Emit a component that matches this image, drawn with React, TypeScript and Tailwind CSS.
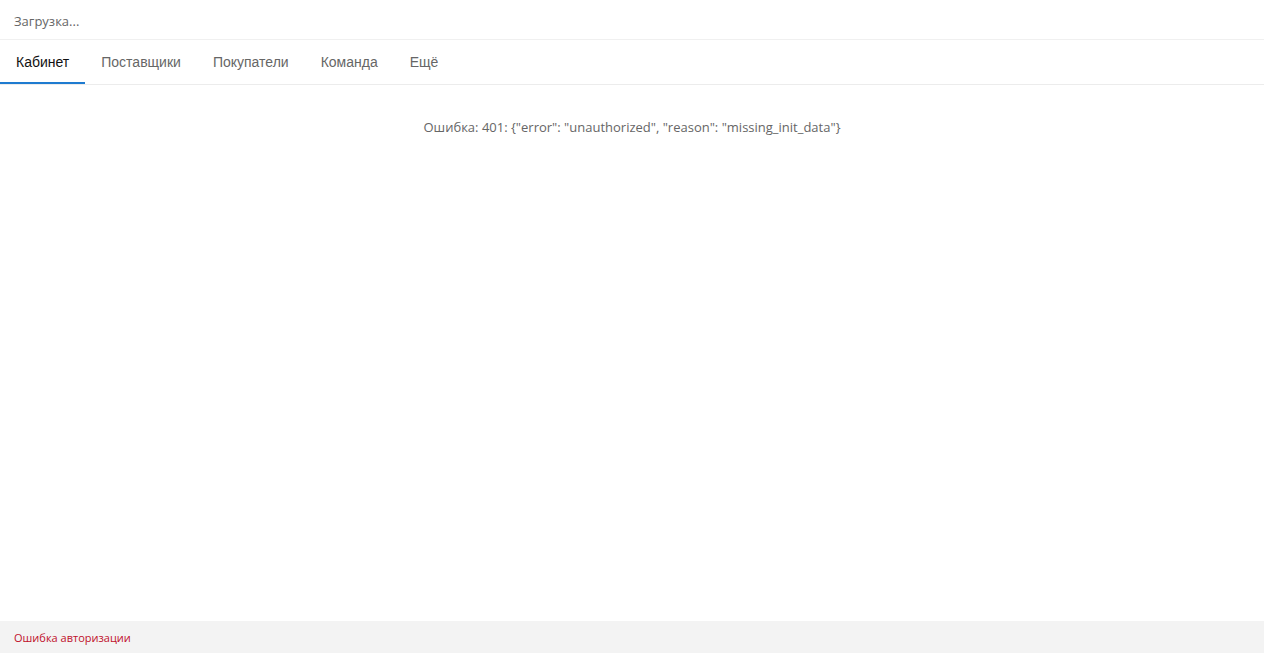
import React from "react";

export default function App() {
  const tabs = ["Кабинет", "Поставщики", "Покупатели", "Команда", "Ещё"];
  return (
    <div className="flex h-[653px] w-full flex-col bg-white" style={{ fontFamily: '"Open Sans", "Noto Sans", sans-serif' }}>
      <div className="flex h-[40px] items-center border-b border-[#f0f0f0] px-[14px] pt-[4px] text-[13px] text-[#666]">
        Загрузка...
      </div>
      <div className="flex h-[45px] border-b border-[#ececec]" style={{ fontFamily: '"Liberation Sans", Arial, sans-serif' }}>
        {tabs.map((t, i) => (
          <div
            key={t}
            className={
              i === 0
                ? "flex items-center border-b-2 border-[#1e7bd0] px-4 pt-[2px] text-[14px] text-[#111]"
                : "flex items-center border-b-2 border-transparent px-4 pt-[2px] text-[14px] text-[#666]"
            }
          >
            {t}
          </div>
        ))}
      </div>
      <div className="flex-1">
        <div className="pt-[33px] text-center text-[13px] text-[#666]">
          Ошибка: 401: {'{"error": "unauthorized", "reason": "missing_init_data"}'}
        </div>
      </div>
      <div className="flex h-[32px] items-center bg-[#f3f3f3] px-[14px] pt-[2px] text-[11px] text-[#c0102a]">
        Ошибка авторизации
      </div>
    </div>
  );
}
